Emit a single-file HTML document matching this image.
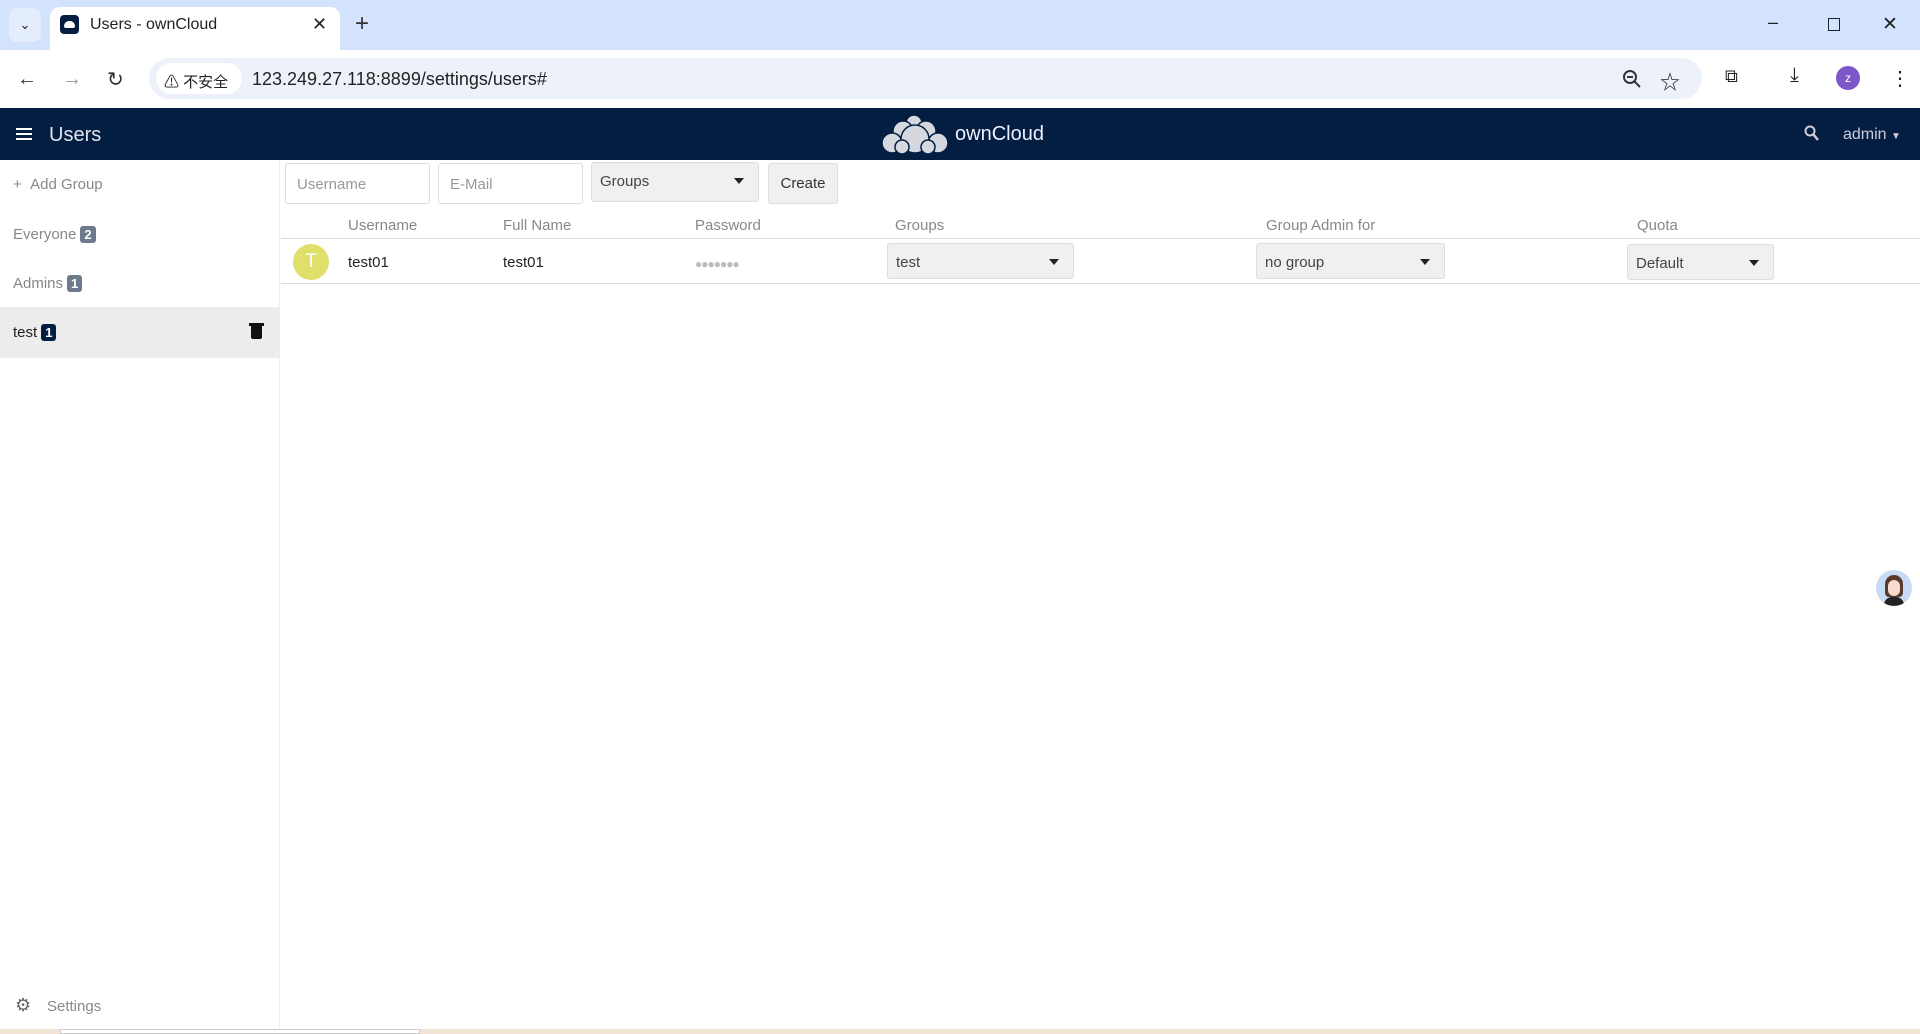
<!DOCTYPE html>
<html><head><meta charset="utf-8"><style>
*{box-sizing:border-box;margin:0;padding:0}
body{width:1920px;height:1034px;overflow:hidden;font-family:"Liberation Sans","Noto Sans CJK SC",sans-serif;background:#fff;position:relative;color:#222}
.a{position:absolute}
.tabbar{left:0;top:0;width:1920px;height:50px;background:#d3e3fd}
.tab{left:50px;top:7px;width:290px;height:43px;background:#fff;border-radius:10px 10px 0 0}
.addr{left:0;top:50px;width:1920px;height:58px;background:#fff}
.url{left:149px;top:58px;width:1553px;height:41px;background:#edf2fa;border-radius:21px}
.hdr{left:0;top:108px;width:1920px;height:52px;background:#041e42}
.side{left:0;top:160px;width:280px;height:869px;border-right:1px solid #eee;background:#fff}
.g{color:#888;font-size:15px}
.badge{display:inline-block;background:#6d7a8c;color:#fff;font-size:13px;padding:1px 4px;border-radius:3px;margin-left:4px;font-weight:bold}
.inp{border:1px solid #ddd;border-radius:3px;height:41px;font-size:15px;color:#999;padding:12px 11px}
.sel{background:#f0f0f0;border:1px solid #ddd;border-radius:3px;font-size:15px;color:#444;padding:10px 8px}
.sel:after{content:"";position:absolute;right:14px;top:15px;border:5px solid transparent;border-top:6px solid #222}
.th{top:217px;font-size:15px;color:#888}
.td{top:254px;font-size:15px;color:#222}
</style></head><body>
<div class="a tabbar"></div>
<div class="a" style="left:9px;top:8px;width:32px;height:34px;background:#e4edfc;border-radius:8px;font-size:13px;text-align:center;line-height:34px">&#8964;</div>
<div class="a tab"></div>
<div class="a" style="left:60px;top:15px;width:19px;height:19px;background:#041e42;border-radius:4px"><div style="position:absolute;left:4px;top:6px;width:11px;height:7px;background:#fff;border-radius:5px 5px 2px 2px"></div></div>
<div class="a" style="left:90px;top:16px;font-size:16px;color:#222">Users - ownCloud</div>
<div class="a" style="left:312px;top:14px;font-size:18px">✕</div>
<div class="a" style="left:355px;top:10px;font-size:24px;color:#333">+</div>
<div class="a" style="left:1768px;top:12px;font-size:18px">–</div>
<div class="a" style="left:1828px;top:18px;width:12px;height:13px;border:1.5px solid #222"></div>
<div class="a" style="left:1882px;top:13px;font-size:19px">✕</div>
<div class="a addr"></div>
<div class="a" style="left:17px;top:68px;font-size:20px;color:#333">←</div>
<div class="a" style="left:62px;top:68px;font-size:20px;color:#999">→</div>
<div class="a" style="left:107px;top:67px;font-size:20px;color:#333">↻</div>
<div class="a url"></div>
<div class="a" style="left:156px;top:63px;width:86px;height:31px;background:#fff;border-radius:16px;font-size:15px;padding:8px 8px">⚠ 不安全</div>
<div class="a" style="left:252px;top:69px;font-size:18px;color:#222">123.249.27.118:8899/settings/users#</div>
<svg class="a" style="left:1622px;top:69px" width="20" height="20"><circle cx="8" cy="8" r="6" fill="none" stroke="#333" stroke-width="2"/><path d="M12 12l6 6M5 8h6" stroke="#333" stroke-width="2"/></svg>
<div class="a" style="left:1660px;top:66px;font-size:20px">☆</div>
<div class="a" style="left:1725px;top:66px;font-size:18px">⧉</div>
<div class="a" style="left:1790px;top:64px;font-size:20px">⤓</div>
<div class="a" style="left:1836px;top:66px;width:24px;height:24px;border-radius:50%;background:#7b57c8;color:#fff;font-size:12px;text-align:center;line-height:24px">z</div>
<div class="a" style="left:1890px;top:66px;font-size:20px">⋮</div>
<div class="a hdr"></div>
<div class="a" style="left:16px;top:128px;width:16px;height:2px;background:#fff;box-shadow:0 5px 0 #fff,0 10px 0 #fff"></div>
<div class="a" style="left:49px;top:124px;font-size:20px;color:#dfe5ee">Users</div>
<svg class="a" style="left:880px;top:113px" width="70" height="42"><g fill="#d5d9df" stroke="#041e42" stroke-width="1.5"><circle cx="34" cy="10" r="8"/><circle cx="23" cy="18" r="10"/><circle cx="46" cy="18" r="10"/><circle cx="12" cy="30" r="10"/><circle cx="58" cy="30" r="10"/><circle cx="35" cy="26" r="14"/><circle cx="22" cy="34" r="7"/><circle cx="48" cy="34" r="7"/></g></svg>
<div class="a" style="left:955px;top:123px;font-size:20px;color:#eef">ownCloud</div>
<svg class="a" style="left:1804px;top:125px" width="16" height="18"><circle cx="6" cy="6" r="4.5" fill="none" stroke="#ccd" stroke-width="2"/><path d="M9 9l5 6" stroke="#ccd" stroke-width="2.5"/></svg>
<div class="a" style="left:1843px;top:126px;font-size:16px;color:#ccd">admin <span style="font-size:10px">▼</span></div>
<div class="a side"></div>
<div class="a g" style="left:13px;top:176px">+ &nbsp;Add Group</div>
<div class="a g" style="left:13px;top:226px">Everyone<span class="badge">2</span></div>
<div class="a g" style="left:13px;top:275px">Admins<span class="badge">1</span></div>
<div class="a" style="left:0;top:307px;width:280px;height:51px;background:#ededed"></div>
<div class="a" style="left:13px;top:324px;font-size:15px">test<span class="badge" style="background:#041e42">1</span></div>
<div class="a" style="left:251px;top:326px;width:11px;height:13px;background:#111;border-radius:0 0 2px 2px"></div>
<div class="a" style="left:249px;top:323px;width:15px;height:3px;background:#111"></div>
<div class="a g" style="left:15px;top:995px;font-size:18px;color:#666">⚙</div>
<div class="a g" style="left:47px;top:998px">Settings</div>
<div class="a" style="left:0;top:1029px;width:1920px;height:5px;background:#f2e4d4"></div>
<div class="a" style="left:60px;top:1029px;width:360px;height:5px;background:#fff;border:1px solid #ccc"></div>
<div class="a inp" style="left:285px;top:163px;width:145px">Username</div>
<div class="a inp" style="left:438px;top:163px;width:145px">E-Mail</div>
<div class="a sel" style="left:591px;top:162px;width:168px;height:40px">Groups</div>
<div class="a" style="left:768px;top:163px;width:70px;height:41px;background:#f0f0f0;border:1px solid #ddd;border-radius:3px;font-size:15px;color:#333;text-align:center;line-height:39px">Create</div>
<div class="a th" style="left:348px">Username</div>
<div class="a th" style="left:503px">Full Name</div>
<div class="a th" style="left:695px">Password</div>
<div class="a th" style="left:895px">Groups</div>
<div class="a th" style="left:1266px">Group Admin for</div>
<div class="a th" style="left:1637px">Quota</div>
<div class="a" style="left:281px;top:238px;width:1639px;height:1px;background:#ddd"></div>
<div class="a" style="left:281px;top:283px;width:1639px;height:1px;background:#ddd"></div>
<div class="a" style="left:293px;top:244px;width:36px;height:36px;border-radius:50%;background:#dfe06a;color:#fff;font-size:19px;text-align:center;line-height:36px">T</div>
<div class="a td" style="left:348px">test01</div>
<div class="a td" style="left:503px">test01</div>
<div class="a td" style="left:695px;color:#bbb;letter-spacing:-1px;font-size:12px;top:257px">●●●●●●●</div>
<div class="a sel" style="left:887px;top:243px;width:187px;height:36px">test</div>
<div class="a sel" style="left:1256px;top:243px;width:189px;height:36px">no group</div>
<div class="a sel" style="left:1627px;top:244px;width:147px;height:36px">Default</div>
<div class="a" style="left:1876px;top:570px;width:36px;height:36px;border-radius:50%;background:#c6dcf5;overflow:hidden"><div style="position:absolute;left:9px;top:5px;width:18px;height:22px;background:#5a3a2a;border-radius:9px 9px 4px 4px"></div><div style="position:absolute;left:12px;top:10px;width:12px;height:16px;background:#f6dccd;border-radius:6px"></div><div style="position:absolute;left:8px;top:27px;width:20px;height:10px;background:#222;border-radius:8px 8px 0 0"></div></div>
</body></html>
